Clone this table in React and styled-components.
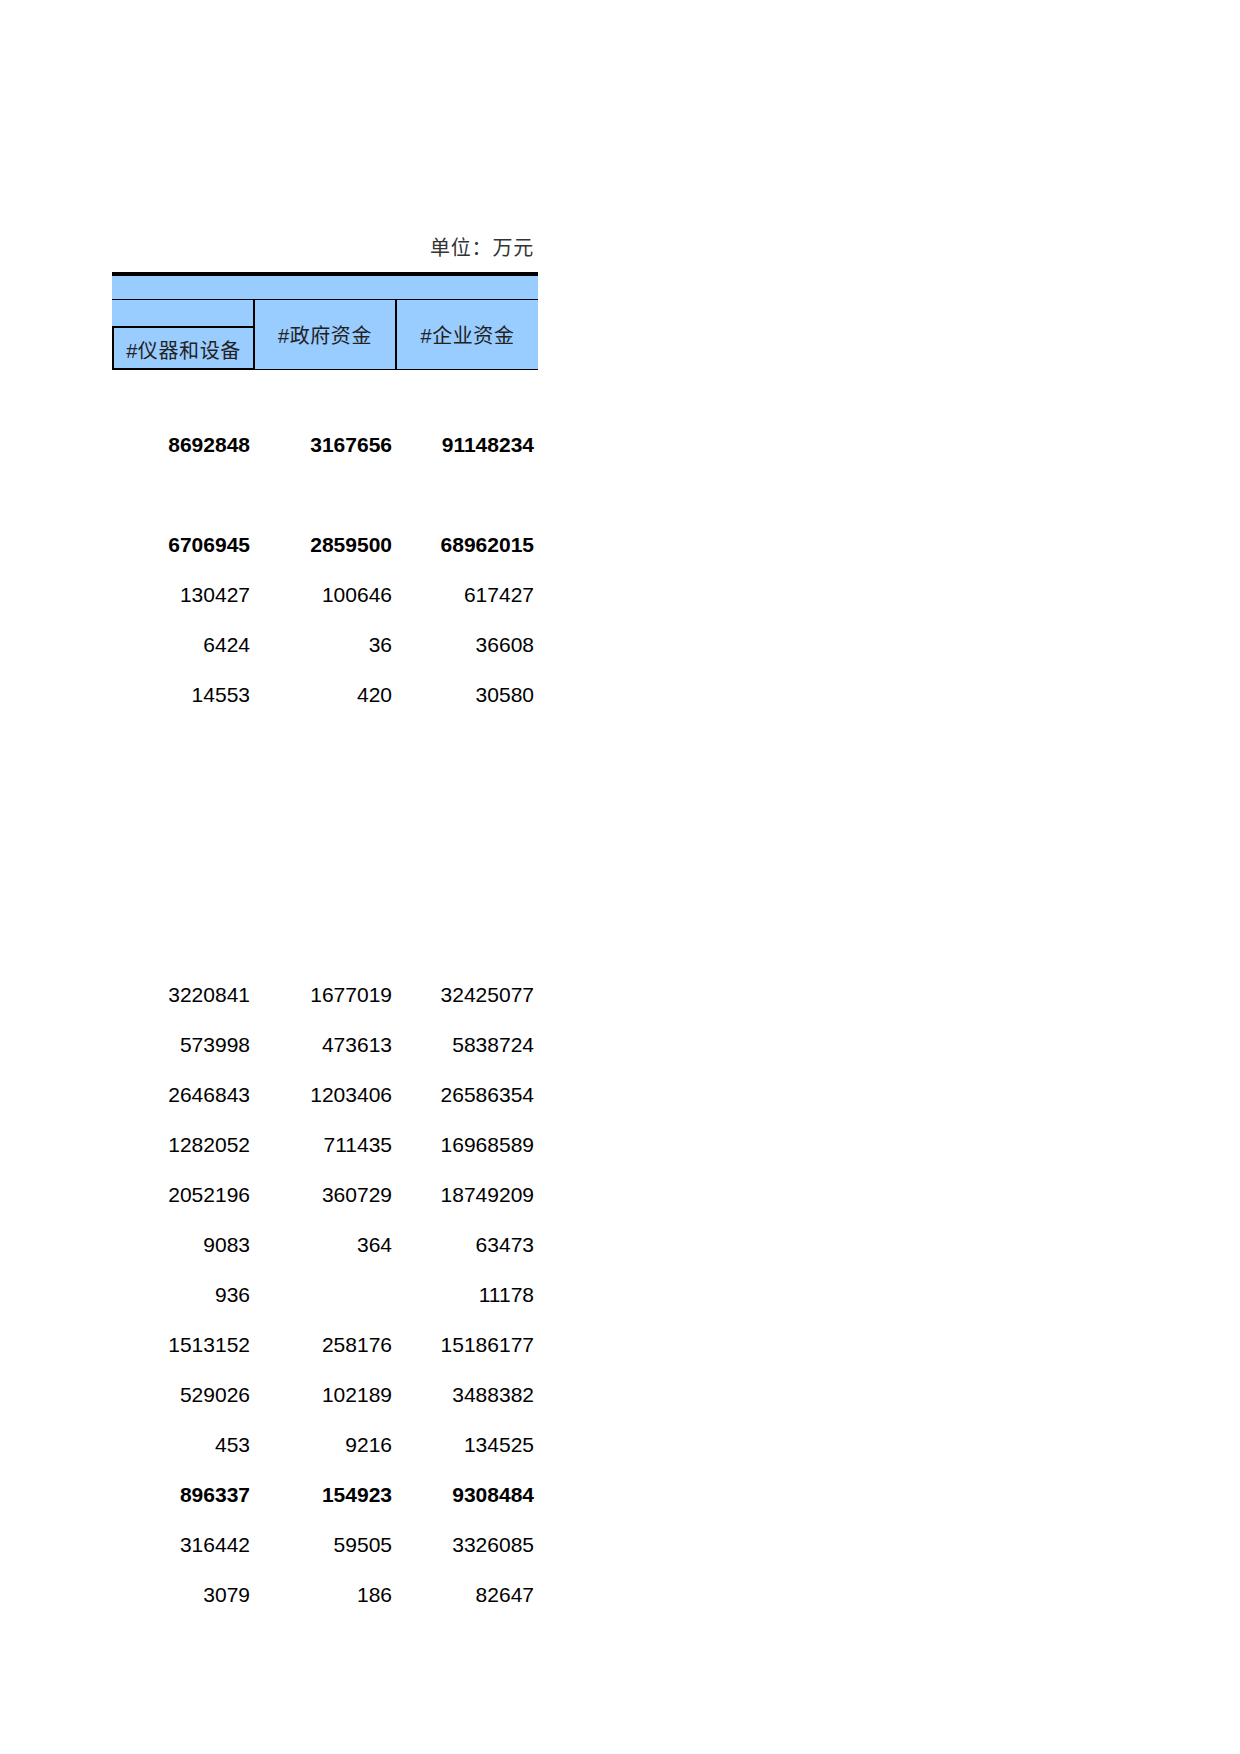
import React from "react";
import styled, { createGlobalStyle } from "styled-components";

const GlobalStyle = createGlobalStyle`
  html, body {
    margin: 0;
    padding: 0;
    background: #ffffff;
  }
  body {
    font-family: "Liberation Sans", "Noto Sans CJK SC", sans-serif;
  }
`;

const Page = styled.div`
  width: 1240px;
  min-height: 1754px;
  padding: 222px 0 0 112px;
  box-sizing: border-box;
`;

const Sheet = styled.div`
  width: 426px;
`;

const Unit = styled.div`
  height: 50px;
  line-height: 50px;
  text-align: right;
  padding-right: 4px;
  font-family: "Noto Sans CJK SC", sans-serif;
  font-size: 20px;
  letter-spacing: 0.8px;
  color: #333333;
`;

const Header = styled.div`
  display: grid;
  grid-template-columns: 141px 142px 143px;
  grid-template-rows: 24px 26px 44px;
  border-top: 4px solid #000;
  background: #99ccff;
`;

const Band = styled.div`
  grid-column: 1 / -1;
  grid-row: 1;
  border-bottom: 1px solid #000;
`;

const Spacer = styled.div`
  grid-column: 1;
  grid-row: 2;
`;

const HeadCell = styled.div`
  grid-column: ${(p) => p.$col};
  grid-row: ${(p) => p.$rows};
  display: flex;
  align-items: center;
  justify-content: center;
  box-sizing: border-box;
  font-family: "Liberation Sans", "Noto Sans CJK SC", sans-serif;
  font-size: 20px;
  letter-spacing: 0.6px;
  color: #222222;
  border-bottom: ${(p) => (p.$boxed ? "2px" : "1px")} solid #000;
  border-left: ${(p) => (p.$divider || p.$boxed ? "2px solid #000" : "none")};
  border-top: ${(p) => (p.$boxed ? "2px solid #000" : "none")};
  padding-top: ${(p) => (p.$boxed ? "2px" : "0")};
`;

const Row = styled.div`
  display: grid;
  grid-template-columns: 141px 142px 143px;
  height: 50px;
`;

const Num = styled.div`
  text-align: right;
  padding-right: ${(p) => p.$pad}px;
  line-height: 50px;
  font-family: "Liberation Sans", Arial, sans-serif;
  font-size: 21px;
  font-weight: ${(p) => (p.$bold ? 700 : 400)};
  color: #000;
`;

const rows = [
  null,
  { v: ["8692848", "3167656", "91148234"], b: true },
  null,
  { v: ["6706945", "2859500", "68962015"], b: true },
  { v: ["130427", "100646", "617427"] },
  { v: ["6424", "36", "36608"] },
  { v: ["14553", "420", "30580"] },
  null,
  null,
  null,
  null,
  null,
  { v: ["3220841", "1677019", "32425077"] },
  { v: ["573998", "473613", "5838724"] },
  { v: ["2646843", "1203406", "26586354"] },
  { v: ["1282052", "711435", "16968589"] },
  { v: ["2052196", "360729", "18749209"] },
  { v: ["9083", "364", "63473"] },
  { v: ["936", "", "11178"] },
  { v: ["1513152", "258176", "15186177"] },
  { v: ["529026", "102189", "3488382"] },
  { v: ["453", "9216", "134525"] },
  { v: ["896337", "154923", "9308484"], b: true },
  { v: ["316442", "59505", "3326085"] },
  { v: ["3079", "186", "82647"] },
];

const pads = [3, 3, 4];

export default function App() {
  return (
    <>
      <GlobalStyle />
      <Page>
        <Sheet>
          <Unit>单位：万元</Unit>
          <Header>
            <Band />
            <Spacer />
            <HeadCell $col={1} $rows="3" $boxed>
              #仪器和设备
            </HeadCell>
            <HeadCell $col={2} $rows="2 / 4" $divider>
              #政府资金
            </HeadCell>
            <HeadCell $col={3} $rows="2 / 4" $divider>
              #企业资金
            </HeadCell>
          </Header>
          {rows.map((r, i) => (
            <Row key={i}>
              {[0, 1, 2].map((c) => (
                <Num key={c} $pad={pads[c]} $bold={r && r.b}>
                  {r ? r.v[c] : ""}
                </Num>
              ))}
            </Row>
          ))}
        </Sheet>
      </Page>
    </>
  );
}
